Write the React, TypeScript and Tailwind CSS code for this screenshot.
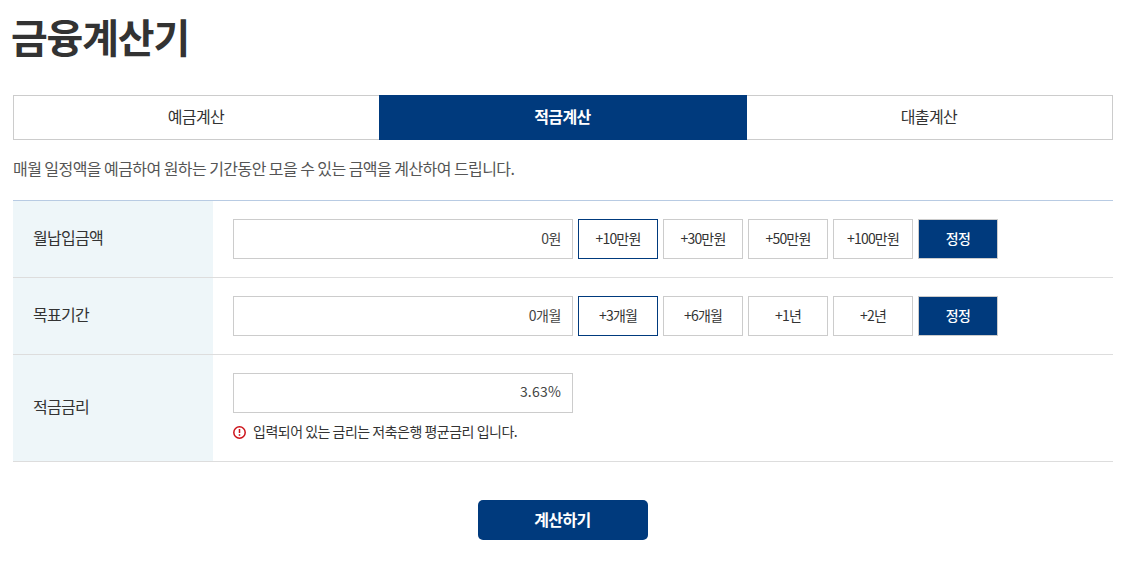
const FONT = "font-['Noto_Sans_CJK_KR','Noto_Sans',sans-serif]";

const amountButtons = ['+10만원', '+30만원', '+50만원', '+100만원'];
const periodButtons = ['+3개월', '+6개월', '+1년', '+2년'];

function ValueBox({ value }: { value: string }) {
  return (
    <div className={`flex h-10 w-[340px] items-center justify-end border border-[#cccccc] bg-white pr-[11px] text-[14px] text-[#444444] ${value.includes('%') ? 'pb-[3px] tracking-[0.2px]' : 'pb-[2px] tracking-[-0.4px]'}`}>
      {value}
    </div>
  );
}

function ButtonRow({ labels }: { labels: string[] }) {
  return (
    <div className="flex gap-[5px]">
      {labels.map((label, index) => (
        <button
          key={label}
          className={`h-10 w-20 border bg-white pb-[2px] text-[14px] tracking-[-0.8px] text-[#333333] ${index === 0 ? 'border-[#003a7d]' : 'border-[#cccccc]'}`}
        >
          {label}
        </button>
      ))}
      <button className="h-10 w-20 border border-[#cccccc] bg-[#003a7d] pb-[2px] text-[14px] font-medium tracking-[-0.7px] text-white">
        정정
      </button>
    </div>
  );
}

function Row({ label, children, tall }: { label: string; children: React.ReactNode; tall?: boolean }) {
  return (
    <div className={`flex border-b border-[#dddddd] ${tall ? 'h-[107px]' : 'h-[77px]'}`}>
      <div className="flex w-[200px] items-center bg-[#eef6f9] pb-[5px] pl-5 text-[16px] tracking-[-0.7px] text-[#333333]">
        {label}
      </div>
      <div className="flex-1 pl-5 pt-[18px]">{children}</div>
    </div>
  );
}

export default function App() {
  return (
    <div className={`${FONT} min-h-screen bg-white px-[13px]`}>
      <div className="w-[1100px]">
        <h1 className="-ml-[2px] pt-[7px] pb-[2px] text-[40px] font-bold leading-[58px] tracking-[-1.2px] text-[#333333]">금융계산기</h1>

        {/* 탭 */}
        <div className="mt-[28px] flex h-[45px]">
          <div className="flex w-[366px] items-center justify-center border border-r-0 border-[#cccccc] pb-[3px] pr-[1px] text-[16px] tracking-[-0.6px] text-[#333333]">
            예금계산
          </div>
          <div className="flex w-[368px] items-center justify-center bg-[#003a7d] pb-[3px] pr-[1px] text-[16px] font-bold tracking-[-0.6px] text-white">
            적금계산
          </div>
          <div className="flex w-[366px] items-center justify-center border border-l-0 border-[#cccccc] pb-[3px] pr-[1px] text-[16px] tracking-[-0.6px] text-[#333333]">
            대출계산
          </div>
        </div>

        <p className="mt-[17px] text-[16px] leading-[22px] tracking-[-0.56px] text-[#555555]">
          매월 일정액을 예금하여 원하는 기간동안 모을 수 있는 금액을 계산하여 드립니다.
        </p>

        {/* 입력 테이블 */}
        <div className="mt-[21px] border-t border-[#b8cbe3]">
          <Row label="월납입금액">
            <div className="flex gap-[5px]">
              <ValueBox value="0원" />
              <ButtonRow labels={amountButtons} />
            </div>
          </Row>
          <Row label="목표기간">
            <div className="flex gap-[5px]">
              <ValueBox value="0개월" />
              <ButtonRow labels={periodButtons} />
            </div>
          </Row>
          <Row label="적금금리" tall>
            <ValueBox value="3.63%" />
            <div className="mt-[8px] flex items-center gap-[7px] text-[14px] leading-5 tracking-[-0.5px] text-[#333333]">
              <svg width="13" height="13" viewBox="0 0 13 13" fill="none" className="mt-[3px]">
                <circle cx="6.5" cy="6.5" r="5.7" stroke="#cc1219" strokeWidth="1.5" />
                <rect x="5.75" y="3" width="1.5" height="4" fill="#cc1219" />
                <rect x="5.75" y="8.2" width="1.5" height="1.6" fill="#cc1219" />
              </svg>
              <span>입력되어 있는 금리는 저축은행 평균금리 입니다.</span>
            </div>
          </Row>
        </div>

        <div className="mt-[38px] flex justify-center">
          <button className="h-10 w-[170px] rounded-[5px] bg-[#003a7d] pb-[2px] pr-[1px] text-[16px] font-bold tracking-[-0.6px] text-white">
            계산하기
          </button>
        </div>
      </div>
    </div>
  );
}
